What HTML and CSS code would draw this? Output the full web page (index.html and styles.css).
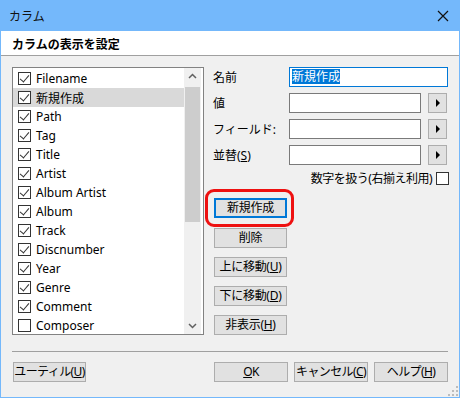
FILE: index.html
```html
<!DOCTYPE html>
<html lang="ja">
  <head>
    <meta charset="utf-8">
    <title>カラム</title>
    <link rel="stylesheet" href="styles.css">
  </head>
  <body>
    <div class="window">
      <div class="titlebar">
        <span class="title">カラム</span>
        <svg class="close" width="12" height="12" viewBox="0 0 12 12">
          <path d="M1 1 L11 11 M11 1 L1 11" stroke="#111" stroke-width="1.2" fill="none"/>
        </svg>
      </div>

      <div class="header">カラムの表示を設定</div>

      <div class="main">
        <div class="listbox">
          <ul class="items">
            <li><span class="check on"></span>Filename</li>
            <li class="selected"><span class="check on"></span>新規作成</li>
            <li><span class="check on"></span>Path</li>
            <li><span class="check on"></span>Tag</li>
            <li><span class="check on"></span>Title</li>
            <li><span class="check on"></span>Artist</li>
            <li><span class="check on"></span>Album Artist</li>
            <li><span class="check on"></span>Album</li>
            <li><span class="check on"></span>Track</li>
            <li><span class="check on"></span>Discnumber</li>
            <li><span class="check on"></span>Year</li>
            <li><span class="check on"></span>Genre</li>
            <li><span class="check on"></span>Comment</li>
            <li><span class="check"></span>Composer</li>
          </ul>
          <div class="scrollbar">
            <svg class="arrow" width="17" height="17" viewBox="0 0 17 17">
              <path d="M5 10 L8.5 6.5 L12 10" stroke="#606060" stroke-width="1.5" fill="none"/>
            </svg>
            <div class="track"><div class="thumb"></div></div>
            <svg class="arrow" width="17" height="17" viewBox="0 0 17 17">
              <path d="M5 7 L8.5 10.5 L12 7" stroke="#606060" stroke-width="1.5" fill="none"/>
            </svg>
          </div>
        </div>

        <div class="side">
          <div class="field">
            <label class="label">名前</label>
            <div class="input wide focused"><span class="sel">新規作成</span></div>
          </div>
          <div class="field">
            <label class="label">値</label>
            <div class="input"></div>
            <button class="mini" type="button"><span class="tri"></span></button>
          </div>
          <div class="field">
            <label class="label">フィールド:</label>
            <div class="input"></div>
            <button class="mini" type="button"><span class="tri"></span></button>
          </div>
          <div class="field">
            <label class="label">並替(<u>S</u>)</label>
            <div class="input"></div>
            <button class="mini" type="button"><span class="tri"></span></button>
          </div>
          <div class="numeric">
            <span>数字を扱う(右揃え利用)</span>
            <span class="check"></span>
          </div>

          <div class="actions">
            <div class="mark"></div>
            <button class="btn default" type="button">新規作成</button>
            <button class="btn" type="button">削除</button>
            <button class="btn" type="button">上に移動(<u>U</u>)</button>
            <button class="btn" type="button">下に移動(<u>D</u>)</button>
            <button class="btn" type="button">非表示(<u>H</u>)</button>
          </div>
        </div>
      </div>

      <div class="separator"></div>

      <div class="footer">
        <button class="btn" type="button">ユーティル(<u>U</u>)</button>
        <div class="footer-right">
          <button class="btn" type="button"><u>O</u>K</button>
          <button class="btn" type="button">キャンセル(<u>C</u>)</button>
          <button class="btn" type="button">ヘルプ(<u>H</u>)</button>
        </div>
      </div>

      <svg class="grip" width="10" height="10" viewBox="0 0 10 10">
        <rect x="8" y="0" width="2" height="2" fill="#bcbcbc"/>
        <rect x="4" y="4" width="2" height="2" fill="#bcbcbc"/>
        <rect x="8" y="4" width="2" height="2" fill="#bcbcbc"/>
        <rect x="0" y="8" width="2" height="2" fill="#bcbcbc"/>
        <rect x="4" y="8" width="2" height="2" fill="#bcbcbc"/>
        <rect x="8" y="8" width="2" height="2" fill="#bcbcbc"/>
      </svg>
    </div>
  </body>
</html>
```

FILE: styles.css
```css
* {
  box-sizing: border-box;
}

body {
  margin: 0;
  font-family: "Noto Sans", "Noto Sans CJK JP", sans-serif;
  font-size: 12px;
  color: #000;
}

.window {
  position: relative;
  width: 460px;
  height: 398px;
  border: 1px solid #74b8fb;
  border-top: none;
  background-color: #f0f0f0;
}

.titlebar {
  display: flex;
  align-items: center;
  justify-content: space-between;
  height: 31px;
  margin: 0 -1px;
  padding: 0 10px 0 9px;
  background-color: #74b8fb;
}

.title {
  font-size: 12px;
  color: #111;
}

.close {
  margin-right: 1px;
}

.header {
  height: 25px;
  padding: 4px 0 0 11px;
  background-color: #fff;
  border-bottom: 1px solid #a0a0a0;
  font-weight: bold;
  font-size: 12px;
}

.main {
  display: flex;
  padding: 11px 0 0 11px;
  height: 280px;
}

/* list of columns */
.listbox {
  display: flex;
  width: 192px;
  height: 268px;
  border: 1px solid #828282;
  background-color: #fff;
  overflow: hidden;
}

.items {
  flex: 1;
  margin: 0;
  padding: 1px 0 0 0;
  list-style: none;
}

.items li {
  display: flex;
  align-items: center;
  gap: 5px;
  height: 19px;
  padding-left: 5px;
}

.items li.selected {
  background-color: #d9d9d9;
}

.check {
  position: relative;
  display: inline-block;
  width: 13px;
  height: 13px;
  border: 1px solid #333;
  background-color: #fff;
  flex-shrink: 0;
}

.check.on::after {
  content: "";
  position: absolute;
  left: 3px;
  top: 0px;
  width: 4px;
  height: 8px;
  border-right: 1.3px solid #333;
  border-bottom: 1.3px solid #333;
  transform: rotate(40deg);
}

.scrollbar {
  display: flex;
  flex-direction: column;
  width: 17px;
  margin-right: 2px;
  background-color: #f0f0f0;
}

.arrow {
  display: block;
  flex-shrink: 0;
}

.track {
  flex: 1;
  padding: 2px 1px;
}

.thumb {
  height: 135px;
  background-color: #cdcdcd;
}

/* right side */
.side {
  display: flex;
  flex-direction: column;
  margin-left: 9px;
}

.field {
  display: flex;
  align-items: center;
  height: 20px;
  margin-bottom: 6px;
}

.label {
  width: 76px;
}

.label u,
.btn u {
  text-decoration: underline;
}

.input {
  width: 132px;
  height: 20px;
  border: 1px solid #7a7a7a;
  background-color: #fff;
}

.input.wide {
  width: 159px;
  padding: 1px 0 0 2px;
  line-height: 15px;
}

.input.focused {
  border-color: #0078d7;
}

.sel {
  display: inline-block;
  background-color: #0078d7;
  color: #fff;
}

.mini {
  display: flex;
  align-items: center;
  justify-content: center;
  width: 19px;
  height: 20px;
  margin-left: 7px;
  padding: 0;
  border: 1px solid #adadad;
  background-color: #e1e1e1;
}

.tri {
  width: 0;
  height: 0;
  border-top: 4px solid transparent;
  border-bottom: 4px solid transparent;
  border-left: 4px solid #000;
}

.numeric {
  display: flex;
  align-items: center;
  justify-content: flex-end;
  gap: 4px;
  width: 236px;
  height: 14px;
  letter-spacing: -0.5px;
}

.actions {
  position: relative;
  display: flex;
  flex-direction: column;
  gap: 9px;
  margin: 13px 0 0 1px;
}

.actions .btn:first-of-type {
  margin-bottom: 1px;
}

.mark {
  position: absolute;
  left: -9px;
  top: -9px;
  width: 89px;
  height: 38px;
  border: 3px solid #ee1111;
  border-radius: 9px;
}

.btn {
  width: 73px;
  height: 20px;
  padding: 0;
  border: 1px solid #adadad;
  background-color: #e1e1e1;
  font-family: inherit;
  font-size: 12px;
  line-height: 16px;
  color: #000;
  white-space: nowrap;
  letter-spacing: -0.3px;
}

.btn.default {
  border: 2px solid #0078d7;
}

.separator {
  height: 1px;
  margin: 15px 11px 0 11px;
  background-color: #a0a0a0;
}

.footer {
  display: flex;
  justify-content: space-between;
  padding: 10px 11px 0 12px;
}

.footer .btn {
  letter-spacing: -0.6px;
}

.footer-right {
  display: flex;
  gap: 6px;
}

.footer-right .btn {
  width: 74px;
}

.grip {
  position: absolute;
  right: 1px;
  bottom: 1px;
}
```
